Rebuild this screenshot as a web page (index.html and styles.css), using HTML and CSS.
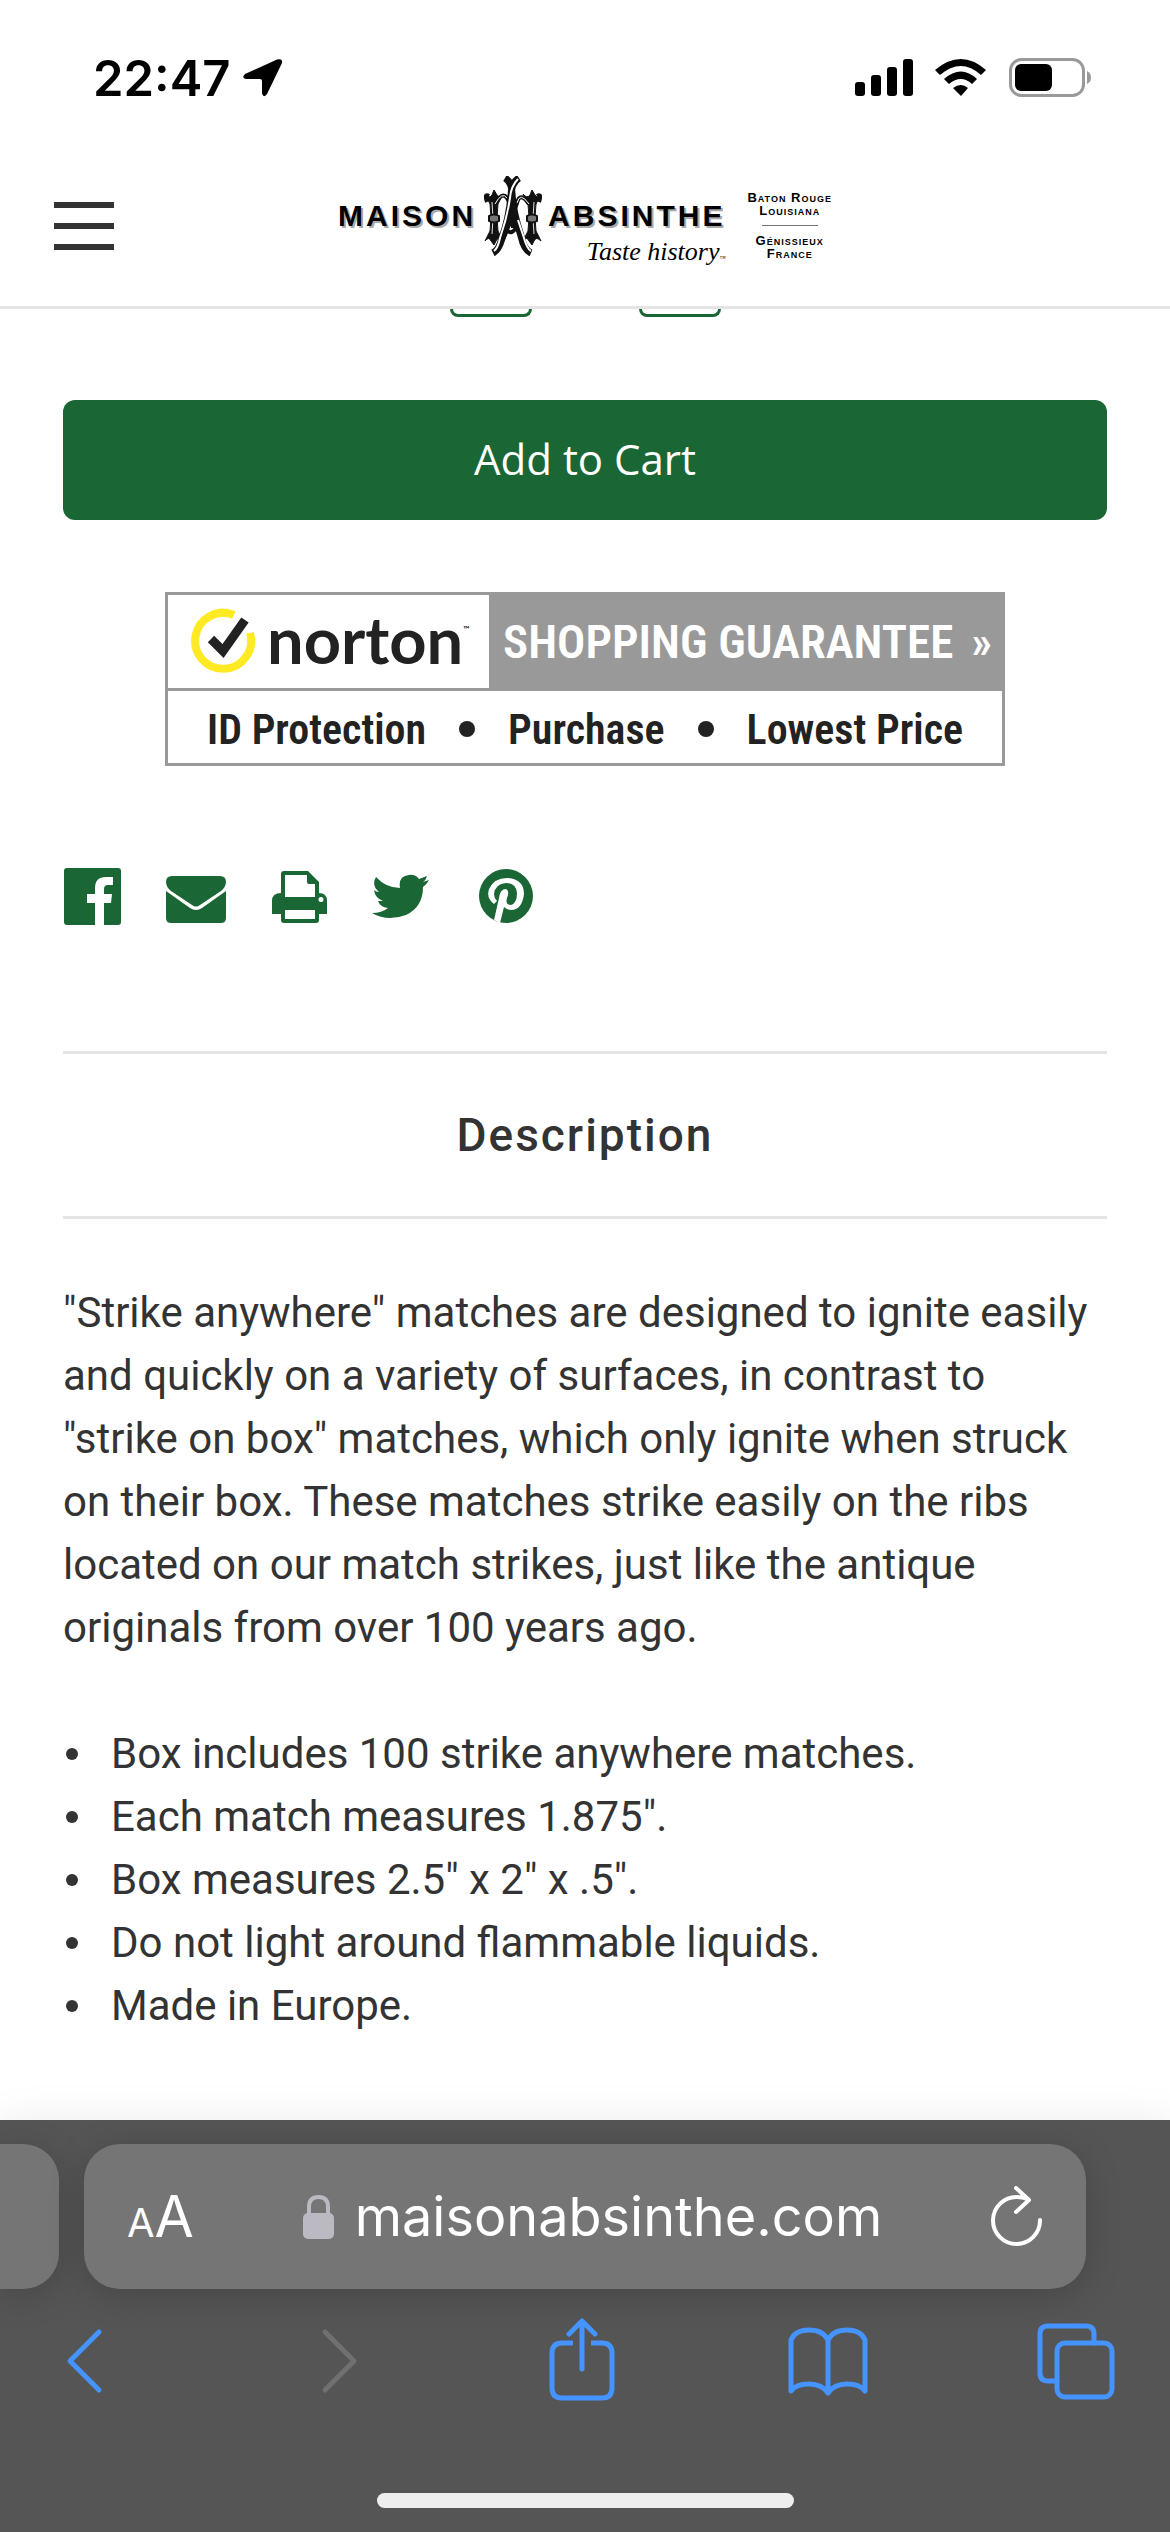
FILE: index.html
```html
<!DOCTYPE html>
<html lang="en">
<head>
    <meta charset="UTF-8">
    <meta name="viewport" content="width=device-width, initial-scale=1">
    <title>Strike Anywhere Matches - Maison Absinthe</title>
    <link rel="stylesheet" href="styles.css">
</head>
<body>
    <div class="status-bar">
        <div class="status-time">
            <span>22:47</span>
            <svg width="40" height="40" viewBox="0 0 40 40"><path d="M34 1.500L2 16Q-2 20 3 21H17Q19 21 19 23V35Q20 41 24 36L39 5Q40 0 34 1.500Z"/></svg>
        </div>
        <div class="status-icons">
            <svg width="58" height="38" viewBox="0 0 58 38"><rect y="23" width="10" height="14" rx="3"/><rect x="16" y="16" width="10" height="21" rx="3"/><rect x="32" y="8" width="10" height="29" rx="3"/><rect x="48" width="10" height="37" rx="3"/></svg>
            <svg width="52" height="38" viewBox="0 0 52 38"><path d="M0 11Q26-11 51 11L46 16Q26-2 5 16ZM9 20Q26 5 42 20L37 25Q26 15 14 25ZM18 29Q26 23 33 29L26 37Z"/></svg>
            <svg width="83" height="40" viewBox="0 0 83 40"><rect x="1.500" y="1.500" width="73" height="36" rx="11" fill="none" stroke="#999" stroke-width="3"/><rect x="6" y="6" width="37" height="27" rx="6"/><path d="M78 13Q82 15 82 19.500T78 26Z" fill="#999"/></svg>
        </div>
    </div>

    <header class="header">
        <button class="menu-button" aria-label="Menu"><span></span><span></span><span></span></button>
        <a class="logo" href="#">
            <span class="logo-name">MAISON</span>
            <svg class="logo-mark" width="60" height="80" viewBox="0 0 60 80">
                <!-- H posts with flared ends -->
                <path d="M3 18Q8 23 10 19L12 14L15 19Q17 23 21 18L16 28Q14 42 16 55L21 65Q16 60 14 65L12 69L9 65Q7 60 3 65L8 55Q10 42 8 28ZM41 18Q45 23 48 19L50 14L53 19Q55 23 59 18L54 28Q52 42 54 55L59 65Q54 60 52 65L50 69L47 65Q45 60 41 65L46 55Q48 42 46 28Z" fill="#111" stroke="#111" stroke-width="1"/>
                <path d="M10 26Q12 42 10 58M52 26Q50 42 52 58" fill="none" stroke="#ddd" stroke-width="1"/>
                <!-- arches and crossbar -->
                <path d="M13 28Q20 15 25 22T31 52M47 28Q38 15 35 27Q29 45 20 66M22 52Q31 62 35 48M7 20Q2 17 5 26M55 20Q60 17 57 26" fill="none" stroke="#111" stroke-width="4"/>
                <path d="M13 28Q20 15 25 22M47 28Q38 15 35 27" fill="none" stroke="#fff" stroke-width="1"/>
                <!-- A -->
                <path d="M23 2Q30 6 30 18Q31 36 39 60Q42 74 49 77M37 2Q29 7 29 20Q27 42 20 62Q17 74 11 77" fill="none" stroke="#111" stroke-width="7"/>
                <path d="M36 3Q29 10 28 22Q25 42 18 62Q16 72 12 75M36 44L42 62Q45 73 49 75" fill="none" stroke="#fff" stroke-width="2"/>
                <path d="M7 40Q12 37 17 40V45Q12 48 7 45ZM45 40Q50 37 55 40V45Q50 48 45 45Z" fill="#777" stroke="#111" stroke-width="2"/>
            </svg>
            <span class="logo-right"><span class="logo-name">ABSINTHE</span><span class="logo-tagline">Taste history<small>™</small></span></span>
            <span class="logo-places"><span>Baton Rouge<br>Louisiana</span><span class="logo-rule"></span><span>Génissieux<br>France</span></span>
        </a>
    </header>

    <main class="product">
        <div class="quantity">
            <button aria-label="Decrease quantity"></button>
            <button aria-label="Increase quantity"></button>
        </div>

        <button class="add-to-cart">Add to Cart</button>

        <a class="guarantee" href="#">
            <span class="guarantee-top">
                <span class="norton">
                    <svg width="66" height="68" viewBox="0 0 66 68"><path d="M43 7A28 28 0 1 0 59 25" fill="none" stroke="#ffea23" stroke-width="8"/><path d="M20 31L32 43L54 12" fill="none" stroke="#222" stroke-width="9"/></svg>
                    <span>norton<small>™</small></span>
                </span>
                <span class="guarantee-title">SHOPPING GUARANTEE <span>»</span></span>
            </span>
            <span class="guarantee-bottom">
                <span>ID Protection</span><span class="dot"></span><span>Purchase</span><span class="dot"></span><span>Lowest Price</span>
            </span>
        </a>

        <div class="share">
            <a href="#" aria-label="Facebook"><svg width="60" height="60" viewBox="0 0 60 60"><path d="M4 1H55Q58 1 58 4V55Q58 58 55 58H41V36H48L49 27H41V22Q41 18 45 18H50V10H43Q32 10 32 21V27H24V36H32V58H4Q1 58 1 55V4Q1 1 4 1Z"/></svg></a>
            <a href="#" aria-label="Email"><svg width="60" height="60" viewBox="0 0 60 60"><path d="M6 9H54Q60 9 60 15Q60 20 55 24L34 38Q30 41 26 38L5 24Q0 20 0 15Q0 9 6 9ZM0 24L24 41Q30 45 36 41L60 24V51Q60 56 55 56H5Q0 56 0 51Z"/></svg></a>
            <a href="#" aria-label="Print"><svg width="60" height="60" viewBox="0 0 60 60"><path fill-rule="evenodd" d="M15 4H39L50 15V26Q58 26 58 34V47H50V53Q50 56 47 56H15Q12 56 12 53V47H3V34Q3 26 12 26V7Q12 4 15 4ZM16 8V30H46V17H40Q38 17 38 15V8ZM16 43V52H46V43ZM52 30A2.500 2.500 0 1 0 52 35A2.500 2.500 0 1 0 52 30Z"/></svg></a>
            <a href="#" aria-label="Twitter"><svg width="60" height="60" viewBox="0 0 60 60"><path d="M0 46Q10 46 16 41Q8 40 6 34H11Q3 31 2 23Q4 25 7 25Q-1 18 4 10Q14 21 28 21Q26 9 37 8Q43 7 47 12L55 9Q54 13 51 15L57 13Q55 17 51 20Q51 40 34 48Q15 55 0 46Z"/></svg></a>
            <a href="#" aria-label="Pinterest"><svg width="60" height="60" viewBox="0 0 60 60"><circle cx="31" cy="29" r="27"/><path d="M19 37Q11 31 14 22Q19 11 32 11Q49 12 49 27Q47 43 36 43Q32 43 29 40L25 56L19 53L24 31Q25 22 31 22Q35 24 32 31Q30 38 36 38Q42 36 42 26Q41 16 31 16Q20 17 19 27Q19 31 22 34Z" fill="#fff"/></svg></a>
        </div>

        <h2 class="section-title">Description</h2>
        <div class="description">
            <p>"Strike anywhere" matches are designed to ignite easily and quickly on a variety of surfaces, in contrast to "strike on box" matches, which only ignite when struck on their box. These matches strike easily on the ribs located on our match strikes, just like the antique originals from over 100 years ago.</p>
            <ul>
                <li>Box includes 100 strike anywhere matches.</li>
                <li>Each match measures 1.875".</li>
                <li>Box measures 2.5" x 2" x .5".</li>
                <li>Do not light around flammable liquids.</li>
                <li>Made in Europe.</li>
            </ul>
        </div>
    </main>

    <footer class="browser-bar">
        <div class="tabs">
            <div class="previous-tab"></div>
            <div class="address">
                <button class="text-size" aria-label="Text size"><small>A</small>A</button>
                <button class="url">
                    <svg width="32" height="44" viewBox="0 0 32 44"><rect y="18" width="31" height="26" rx="5" fill="#bbbac2"/><path d="M6 20V12Q6 2 15.500 2T25 12V20" fill="none" stroke="#bbbac2" stroke-width="4"/></svg>
                    <span>maisonabsinthe.com</span>
                </button>
                <button aria-label="Reload"><svg width="52" height="62" viewBox="0 0 52 62"><path d="M25 2L38 14L25 26M37 13Q31 11 26 11A23.500 23.500 0 1 0 49 34" fill="none" stroke="#fff" stroke-width="4" stroke-linecap="round" stroke-linejoin="round"/></svg></button>
            </div>
        </div>
        <nav class="toolbar">
            <button aria-label="Back"><svg width="80" height="84" viewBox="0 0 80 84"><path d="M55 14L26 43L55 72"/></svg></button>
            <button class="disabled" aria-label="Forward" disabled><svg width="80" height="84" viewBox="0 0 80 84"><path d="M33 14L62 43L33 72"/></svg></button>
            <button aria-label="Share"><svg width="80" height="84" viewBox="0 0 80 84"><path d="M33 25H22Q12 25 12 35V70Q12 80 22 80H62Q72 80 72 70V35Q72 25 62 25H51" stroke-linecap="butt"/><path d="M42 51V3M29 16L42 3L55 16"/></svg></button>
            <button aria-label="Bookmarks"><svg width="80" height="84" viewBox="0 0 80 84"><path d="M40 74V22Q35 12 21 12T3 22V73Q8 66 21 66T40 75Q46 66 59 66T77 73V22Q73 12 59 12T40 22"/></svg></button>
            <button aria-label="Tabs"><svg width="80" height="84" viewBox="0 0 80 84"><rect x="21" y="25" width="55" height="54" rx="8"/><path d="M21 63H12Q4 63 4 55V16Q4 8 12 8H50Q58 8 58 16V25"/></svg></button>
        </nav>
        <div class="home-indicator"></div>
    </footer>
</body>
</html>
```

FILE: styles.css
```css
* {
    box-sizing: border-box;
}
body {
    margin: 0;
    min-height: 100vh;
    display: flex;
    flex-direction: column;
    background-color: #fff;
    color: #333;
    font-family: Roboto, sans-serif;
    font-size: 42px;
    line-height: 63px;
}
button {
    padding: 0;
    border: none;
    background: none;
    color: inherit;
    font-family: inherit;
    font-size: inherit;
    cursor: pointer;
}
a {
    color: inherit;
    text-decoration: none;
}
svg {
    display: block;
    flex: none;
}

/* Status bar */
.status-bar {
    display: flex;
    justify-content: space-between;
    height: 141px;
    padding: 46px 78px 0 93px;
    color: #000;
}
.status-time, .status-icons {
    display: flex;
    align-items: center;
    height: 64px;
}
.status-time {
    gap: 12px;
    font-family: Inter, sans-serif;
    font-size: 49px;
    font-weight: 600;
}
.status-icons {
    gap: 22px;
}

/* Header */
.header {
    display: grid;
    grid-template-columns: 1fr auto 1fr;
    align-items: center;
    height: 168px;
    padding: 4px 54px 0;
    border-bottom: 3px solid #e5e5e5;
}
.menu-button {
    display: flex;
    flex-direction: column;
    gap: 15px;
    width: 60px;
}
.menu-button span {
    height: 6px;
    background-color: #333;
}
.logo {
    display: flex;
    gap: 6px;
    color: #000;
    font-family: "Liberation Sans", Arial, sans-serif;
}
.logo-name {
    font-size: 30px;
    font-weight: bold;
    line-height: 80px;
    letter-spacing: 3px;
    text-shadow: 2px 2px 0 #aaa;
}
.logo-right {
    display: flex;
    flex-direction: column;
}
.logo-tagline {
    align-self: flex-end;
    margin-top: -22px;
    font-family: "Liberation Serif", serif;
    font-size: 26px;
    font-style: italic;
    line-height: 35px;
}
.logo-tagline small {
    font-size: 6px;
}
.logo-places {
    display: flex;
    flex-direction: column;
    align-items: center;
    justify-content: center;
    gap: 8px;
    margin-left: 16px;
    font-size: 13px;
    font-weight: bold;
    font-variant: small-caps;
    line-height: 13px;
    letter-spacing: 1px;
    text-align: center;
}
.logo-rule {
    width: 56px;
    height: 1px;
    background-color: #777;
}

/* Product */
.product {
    flex: 1;
    padding: 0 63px;
}
.quantity {
    display: flex;
    justify-content: center;
    gap: 107px;
}
.quantity button {
    width: 82px;
    height: 8px;
    border: 3px solid #1b6635;
    border-top: none;
    border-radius: 0 0 12px 12px;
}
.add-to-cart {
    display: block;
    width: 100%;
    height: 120px;
    margin-top: 83px;
    padding-bottom: 3px;
    border-radius: 12px;
    background-color: #1b6635;
    color: #fff;
    font-family: "Open Sans", sans-serif;
}
.guarantee {
    display: block;
    width: 840px;
    max-width: 100%;
    margin: 72px auto 0;
    border: 3px solid #999;
    color: #222;
    font-family: "Liberation Sans Narrow", "Roboto Condensed", sans-serif;
    font-weight: 600;
}
.guarantee-top {
    display: flex;
    height: 96px;
    border-bottom: 3px solid #999;
}
.norton {
    display: flex;
    align-items: center;
    gap: 10px;
    width: 321px;
    padding-left: 23px;
    font-family: Lato, sans-serif;
    font-size: 65px;
    font-weight: bold;
}
.norton span {
    padding-bottom: 14px;
}
.norton small {
    font-size: 8px;
    vertical-align: 32px;
}
.guarantee-title {
    flex: 1;
    display: flex;
    align-items: center;
    justify-content: space-between;
    padding: 0 10px 0 14px;
    background-color: #999;
    color: #fff;
    font-size: 47px;
    white-space: nowrap;
}
.guarantee-bottom {
    display: flex;
    align-items: center;
    justify-content: space-between;
    height: 72px;
    padding: 4px 39px 0;
}
.dot {
    width: 16px;
    height: 16px;
    border-radius: 50%;
    background-color: #222;
}
.share {
    display: flex;
    gap: 43px;
    margin-top: 101px;
    fill: #1b6635;
}
.section-title {
    margin: 124px 0 0;
    padding: 51px 0;
    border-top: 3px solid #e5e5e5;
    border-bottom: 3px solid #e5e5e5;
    font-size: 46px;
    font-weight: 500;
    line-height: 60px;
    letter-spacing: 2px;
    text-align: center;
}
.description {
    padding-top: 62px;
}
.description p {
    margin: 0 0 63px;
}
.description ul {
    margin: 0;
    padding: 0;
    list-style: none;
}
.description li {
    display: flex;
    align-items: center;
    gap: 33px;
}
.description li::before {
    content: "";
    width: 12px;
    height: 12px;
    margin-left: 3px;
    border-radius: 50%;
    background-color: #333;
}

/* Browser bar */
.browser-bar {
    height: 412px;
    padding-top: 24px;
    background-color: #555;
    box-shadow: 0 0 40px rgba(0, 0, 0, 0.08);
    color: #fff;
    font-family: Inter, sans-serif;
    overflow: hidden;
}
.tabs {
    display: flex;
    gap: 25px;
    height: 145px;
    padding-right: 84px;
}
.previous-tab {
    width: 59px;
    border-radius: 0 36px 36px 0;
    background-color: #757575;
    box-shadow: 0 6px 36px rgba(0, 0, 0, 0.18);
}
.address {
    flex: 1;
    display: flex;
    align-items: center;
    justify-content: space-between;
    padding: 0 43px;
    border-radius: 36px;
    background-color: #757575;
    box-shadow: 0 6px 36px rgba(0, 0, 0, 0.18);
}
.text-size {
    font-size: 57px;
}
.text-size small {
    font-size: 40px;
}
.url {
    display: flex;
    align-items: center;
    gap: 20px;
    font-size: 54px;
}
.toolbar {
    display: flex;
    justify-content: space-between;
    padding: 29px 54px 0 44px;
}
.toolbar svg {
    fill: none;
    stroke: #4593ff;
    stroke-width: 5;
    stroke-linecap: round;
    stroke-linejoin: round;
}
.toolbar .disabled svg {
    stroke: #707070;
}
.home-indicator {
    width: 417px;
    height: 15px;
    margin: 91px auto 0;
    border-radius: 8px;
    background-color: #eee;
}
```
